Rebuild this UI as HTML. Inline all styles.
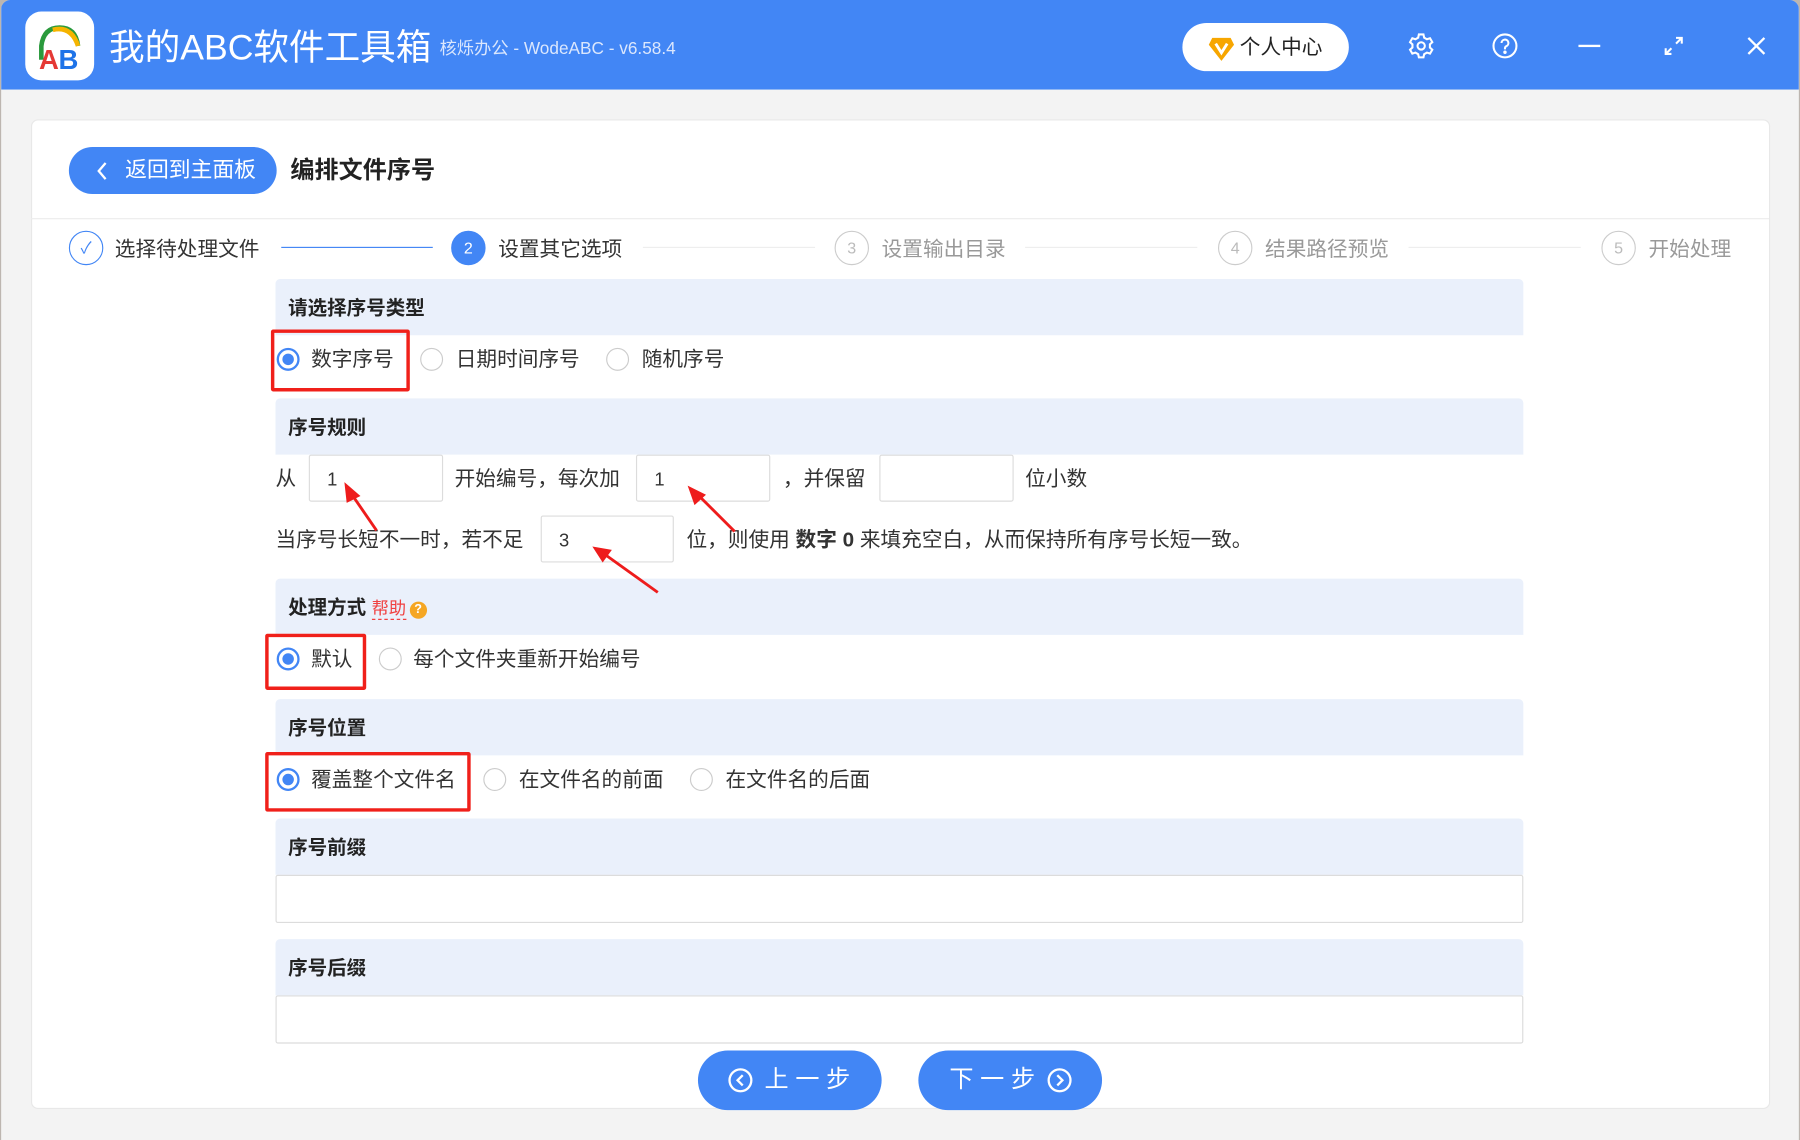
<!DOCTYPE html>
<html><head><meta charset="utf-8"><style>
*{margin:0;padding:0;box-sizing:border-box}
html,body{width:1800px;height:1140px;overflow:hidden;background:#bdb6b0}
#s{position:absolute;left:0;top:0;width:1568px;height:993px;transform:scale(1.14796,1.14804);transform-origin:0 0;font-family:"Liberation Sans","Noto Sans CJK SC",sans-serif;color:#333}
.a{position:absolute}
.win{left:1px;top:0;width:1566px;height:993px;background:#f3f3f3;border-radius:8px 8px 0 0;overflow:hidden}
.hd{left:0;top:0;width:1566px;height:78px;background:#4286f5}
.card{left:26px;top:104px;width:1515px;height:862px;background:#fff;border:1px solid #e8e8e8;border-radius:6px}
.t{white-space:nowrap;line-height:1}
.sec{left:240px;width:1087px;height:49px;background:#eaf0fb;border-radius:4px 4px 0 0;font-size:17px;font-weight:bold;padding:17px 0 0 11px;color:#222}
.r{width:20px;height:20px;border:1px solid #ccc;border-radius:50%;background:#fff}
.r.on{border:2px solid #4286f5}
.r.on:after{content:"";position:absolute;left:3px;top:3px;width:10px;height:10px;border-radius:50%;background:#4286f5}
.lb{font-size:18px}
.inp{border:1px solid #dcdcdc;background:#fff;border-radius:2px;font-size:16px;padding:13px 0 0 15px}
.red{border:3px solid #f0201a;border-radius:2px}
.sc{width:30px;height:30px;border:1px solid #ccc;border-radius:50%;font-size:14px;color:#bbb;text-align:center;line-height:28px}
.sl{font-size:18px;color:#999}
.btn{background:#4286f5;border-radius:26px;color:#fff;font-size:21px}
</style></head><body><div id="s">
<div class="a win">
<div class="a hd"></div>
<div class="a card"></div>
</div>
<div class="a" style="left:22px;top:10px;width:60px;height:60px;background:#fff;border-radius:14px"></div>
<svg class="a" style="left:22px;top:10px" width="60" height="60" viewBox="0 0 60 60"><path d="M14 42 L14 30 Q16 14 30 14 Q44 14 46 30" fill="none" stroke="#2a9a3c" stroke-width="4"/><path d="M24 16 Q40 12 46 30" fill="none" stroke="#f5b400" stroke-width="4"/><text x="12" y="50" font-family="Liberation Sans" font-weight="bold" font-size="24" fill="#e53935">A</text><text x="29" y="50" font-family="Liberation Sans" font-weight="bold" font-size="24" fill="#1e73e8">B</text></svg>
<div class="a t" style="left:95px;top:26px;font-size:31px;color:#fff">我的ABC软件工具箱</div>
<div class="a t" style="left:383px;top:35px;font-size:15px;color:#dbe7fd">核烁办公 - WodeABC - v6.58.4</div>
<div class="a" style="left:1030px;top:20px;width:145px;height:42px;background:#fff;border-radius:21px"></div>
<svg class="a" style="left:1051px;top:29px" width="26" height="26" viewBox="0 0 26 26"><path d="M5 4 H21 L24 10 L13 24 L2 10 Z" fill="#f7a600"/><path d="M8 9 L13 17 L18 9" fill="none" stroke="#fff" stroke-width="2.5"/></svg>
<div class="a t" style="left:1080px;top:32px;font-size:18px;color:#222">个人中心</div>
<svg class="a" style="left:1226px;top:28px" width="24" height="24" viewBox="0 0 24 24" fill="none" stroke="#fff" stroke-width="1.8"><path d="M10 2h4l.6 2.8 2.4 1.4 2.7-.9 2 3.4-2.1 1.9v2.8l2.1 1.9-2 3.4-2.7-.9-2.4 1.4L14 22h-4l-.6-2.8-2.4-1.4-2.7.9-2-3.4 2.1-1.9v-2.8L2.3 8.7l2-3.4 2.7.9 2.4-1.4z"/><circle cx="12" cy="12" r="3.2"/></svg>
<svg class="a" style="left:1299px;top:28px" width="24" height="24" viewBox="0 0 24 24" fill="none" stroke="#fff" stroke-width="1.8"><circle cx="12" cy="12" r="10"/><path d="M9 9.5a3 3 0 1 1 4 2.8c-.8.4-1 1-1 2v.7"/><circle cx="12" cy="17.5" r=".6" fill="#fff"/></svg>
<div class="a" style="left:1375px;top:39px;width:19px;height:2px;background:#fff"></div>
<svg class="a" style="left:1448px;top:30px" width="20" height="20" viewBox="0 0 20 20" fill="none" stroke="#fff" stroke-width="1.8"><path d="M12 3h5v5M17 3l-5 5M8 17H3v-5M3 17l5-5"/></svg>
<svg class="a" style="left:1521px;top:31px" width="18" height="18" viewBox="0 0 18 18" stroke="#fff" stroke-width="2"><path d="M2 2L16 16M16 2L2 16"/></svg>
<div class="a btn" style="left:60px;top:128px;width:181px;height:41px;border-radius:21px;font-size:19px"><svg class="a" style="left:24px;top:13px" width="10" height="16" viewBox="0 0 10 16" fill="none" stroke="#fff" stroke-width="2"><path d="M8 1L2 8l6 7"/></svg><span class="a t" style="left:49px;top:11px">返回到主面板</span></div>
<div class="a t" style="left:253px;top:138px;font-size:21px;font-weight:bold;color:#222">编排文件序号</div>
<div class="a" style="left:27px;top:190px;width:1514px;height:1px;background:#ececec"></div>
<div class="a sc" style="left:60px;top:201px;border-color:#4286f5;color:#4286f5">✓</div>
<div class="a t" style="left:100px;top:208px;font-size:18px;color:#333">选择待处理文件</div>
<div class="a" style="left:245px;top:215px;width:132px;height:1px;background:#4286f5"></div>
<div class="a sc" style="left:393px;top:201px;background:#4286f5;border-color:#4286f5;color:#fff">2</div>
<div class="a t" style="left:434px;top:208px;font-size:18px;color:#333">设置其它选项</div>
<div class="a" style="left:560px;top:215px;width:150px;height:1px;background:#eee"></div>
<div class="a sc" style="left:727px;top:201px">3</div>
<div class="a t sl" style="left:768px;top:208px">设置输出目录</div>
<div class="a" style="left:893px;top:215px;width:150px;height:1px;background:#eee"></div>
<div class="a sc" style="left:1061px;top:201px">4</div>
<div class="a t sl" style="left:1102px;top:208px">结果路径预览</div>
<div class="a" style="left:1227px;top:215px;width:150px;height:1px;background:#eee"></div>
<div class="a sc" style="left:1395px;top:201px">5</div>
<div class="a t sl" style="left:1436px;top:208px">开始处理</div>
<div class="a sec t" style="top:243px">请选择序号类型</div>
<div class="a r on" style="left:241px;top:303px"></div><div class="a t lb" style="left:271px;top:304px">数字序号</div>
<div class="a r" style="left:366px;top:303px"></div><div class="a t lb" style="left:397px;top:304px">日期时间序号</div>
<div class="a r" style="left:528px;top:303px"></div><div class="a t lb" style="left:559px;top:304px">随机序号</div>
<div class="a red" style="left:236px;top:287px;width:121px;height:54px"></div>
<div class="a sec t" style="top:347px">序号规则</div>
<div class="a t lb" style="left:240px;top:408px">从</div>
<div class="a inp" style="left:269px;top:396px;width:117px;height:41px">1</div>
<div class="a t lb" style="left:396px;top:408px">开始编号，每次加</div>
<div class="a inp" style="left:554px;top:396px;width:117px;height:41px">1</div>
<div class="a t lb" style="left:682px;top:408px">，并保留</div>
<div class="a inp" style="left:766px;top:396px;width:117px;height:41px"></div>
<div class="a t lb" style="left:893px;top:408px">位小数</div>
<div class="a t lb" style="left:240px;top:461px">当序号长短不一时，若不足</div>
<div class="a inp" style="left:471px;top:449px;width:116px;height:41px">3</div>
<div class="a t lb" style="left:598px;top:461px">位，则使用 <b>数字 0</b> 来填充空白，从而保持所有序号长短一致。</div>
<div class="a sec t" style="top:504px">处理方式 <span style="color:#f04040;font-weight:normal;font-size:15px;border-bottom:1px dashed #f04040">帮助</span><span style="display:inline-block;width:15px;height:15px;border-radius:50%;background:#f5a623;color:#fff;font-size:11px;text-align:center;line-height:15px;margin-left:3px;vertical-align:1px">?</span></div>
<div class="a r on" style="left:241px;top:564px"></div><div class="a t lb" style="left:271px;top:565px">默认</div>
<div class="a r" style="left:330px;top:564px"></div><div class="a t lb" style="left:360px;top:565px">每个文件夹重新开始编号</div>
<div class="a red" style="left:231px;top:552px;width:88px;height:49px"></div>
<div class="a sec t" style="top:609px">序号位置</div>
<div class="a r on" style="left:241px;top:669px"></div><div class="a t lb" style="left:271px;top:670px">覆盖整个文件名</div>
<div class="a r" style="left:421px;top:669px"></div><div class="a t lb" style="left:452px;top:670px">在文件名的前面</div>
<div class="a r" style="left:601px;top:669px"></div><div class="a t lb" style="left:632px;top:670px">在文件名的后面</div>
<div class="a red" style="left:231px;top:655px;width:179px;height:52px"></div>
<div class="a sec t" style="top:713px">序号前缀</div>
<div class="a inp" style="left:240px;top:762px;width:1087px;height:42px"></div>
<div class="a sec t" style="top:818px">序号后缀</div>
<div class="a inp" style="left:240px;top:867px;width:1087px;height:42px"></div>
<div class="a btn" style="left:608px;top:915px;width:160px;height:52px"><svg class="a" style="left:26px;top:15px" width="22" height="22" viewBox="0 0 22 22" fill="none" stroke="#fff" stroke-width="2"><circle cx="11" cy="11" r="9.5"/><path d="M13 6.5L8.5 11l4.5 4.5"/></svg><span class="a t" style="left:58px;top:15px">上 一 步</span></div>
<div class="a btn" style="left:800px;top:915px;width:160px;height:52px"><span class="a t" style="left:27px;top:15px">下 一 步</span><svg class="a" style="left:112px;top:15px" width="22" height="22" viewBox="0 0 22 22" fill="none" stroke="#fff" stroke-width="2"><circle cx="11" cy="11" r="9.5"/><path d="M9 6.5l4.5 4.5L9 15.5"/></svg></div>
<svg class="a" style="left:0;top:0" width="1568" height="993"><g stroke="#ee1c1c" stroke-width="2.5" fill="#ee1c1c"><line x1="328" y1="462" x2="306" y2="430"/><polygon points="300,420 314,432 302,438" stroke="none"/><line x1="640" y1="463" x2="609" y2="432"/><polygon points="599,423 615,431 605,440" stroke="none"/><line x1="573" y1="516" x2="527" y2="483"/><polygon points="516,476 533,479 525,490" stroke="none"/></g></svg>
</div></body></html>
